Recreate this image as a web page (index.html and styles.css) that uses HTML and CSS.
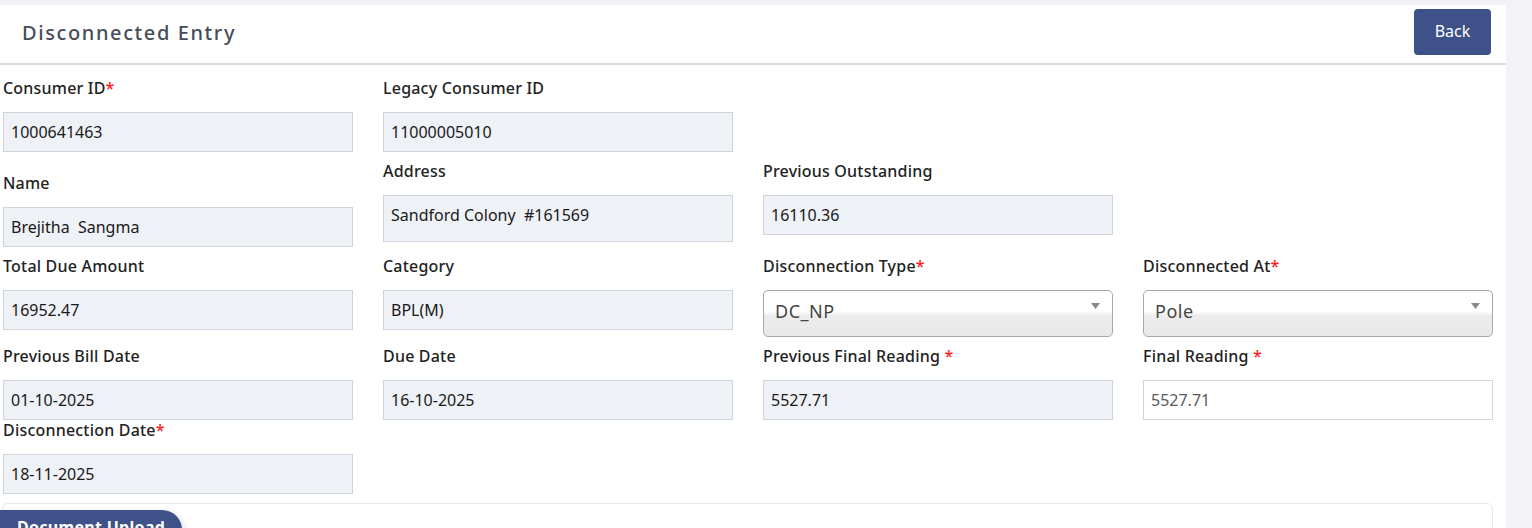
FILE: index.html
```html
<!DOCTYPE html>
<html>
<head>
<meta charset="utf-8">
<link rel="stylesheet" href="styles.css">
</head>
<body>
<div class="page">
  <div class="card">
    <div class="header">
      <h1 class="title">Disconnected Entry</h1>
      <button class="back">Back</button>
    </div>
    <div class="form">
      <div class="row row1">
        <div class="field">
          <label class="lbl">Consumer ID<span class="req">*</span></label>
          <div class="inp">1000641463</div>
        </div>
        <div class="field">
          <label class="lbl">Legacy Consumer ID</label>
          <div class="inp">11000005010</div>
        </div>
      </div>
      <div class="row">
        <div class="field shift">
          <label class="lbl">Name</label>
          <div class="inp">Brejitha&nbsp; Sangma</div>
        </div>
        <div class="field">
          <label class="lbl">Address</label>
          <div class="inp tall">Sandford Colony&nbsp; #161569</div>
        </div>
        <div class="field">
          <label class="lbl">Previous Outstanding</label>
          <div class="inp">16110.36</div>
        </div>
      </div>
      <div class="row">
        <div class="field">
          <label class="lbl">Total Due Amount</label>
          <div class="inp">16952.47</div>
        </div>
        <div class="field">
          <label class="lbl">Category</label>
          <div class="inp">BPL(M)</div>
        </div>
        <div class="field">
          <label class="lbl">Disconnection Type<span class="req">*</span></label>
          <div class="sel"><span>DC_NP</span><svg class="arrow" width="9" height="6" viewBox="0 0 9 6"><path d="M0 0H9L4.5 6Z" fill="#888"/></svg></div>
        </div>
        <div class="field">
          <label class="lbl">Disconnected At<span class="req">*</span></label>
          <div class="sel"><span>Pole</span><svg class="arrow" width="9" height="6" viewBox="0 0 9 6"><path d="M0 0H9L4.5 6Z" fill="#888"/></svg></div>
        </div>
      </div>
      <div class="row">
        <div class="field">
          <label class="lbl">Previous Bill Date</label>
          <div class="inp">01-10-2025</div>
        </div>
        <div class="field">
          <label class="lbl">Due Date</label>
          <div class="inp">16-10-2025</div>
        </div>
        <div class="field">
          <label class="lbl">Previous Final Reading <span class="req">*</span></label>
          <div class="inp">5527.71</div>
        </div>
        <div class="field">
          <label class="lbl">Final Reading <span class="req">*</span></label>
          <div class="inp white">5527.71</div>
        </div>
      </div>
      <div class="row row5">
        <div class="field">
          <label class="lbl">Disconnection Date<span class="req">*</span></label>
          <div class="inp">18-11-2025</div>
        </div>
      </div>
    </div>
    <div class="upload">
      <div class="tab">Document Upload</div>
    </div>
  </div>
</div>
</body>
</html>
```
FILE: styles.css
```css
* { box-sizing: border-box; }
html, body { margin: 0; padding: 0; }
body {
  background: #f2f2f7;
  font-family: "Noto Sans", "Open Sans", sans-serif;
  color: #1f1f1f;
  overflow: hidden;
}
.page {
  padding-top: 5px;
  width: 1506px;
}
.card {
  background: #fff;
  height: 523px;
  overflow: hidden;
}
.header {
  height: 60px;
  border-bottom: 2px solid #dcdcdc;
  display: flex;
  align-items: center;
  justify-content: space-between;
  padding: 0 15px 0 22px;
}
.title {
  margin: 0;
  font-size: 20px;
  font-weight: 500;
  letter-spacing: 1.6px;
  color: #474d58;
  padding-bottom: 3px;
}
.back {
  background: #3f5189;
  color: #fff;
  border: none;
  border-radius: 4px;
  width: 77px;
  height: 46px;
  font-family: inherit;
  font-size: 16px;
  margin-bottom: 4px;
  padding: 0 0 2px;
}
.form {
  padding: 12px 0 0 3px;
}
.row {
  display: grid;
  grid-template-columns: repeat(4, 350px);
  column-gap: 30px;
  align-items: start;
  margin-bottom: 8px;
}
.row.row5 { margin-top: -9px; }
.field { display: flex; flex-direction: column; }
.field.shift { margin-top: 12px; }
.lbl {
  font-size: 16px;
  font-weight: 500;
  letter-spacing: 0.2px;
  line-height: 22px;
  height: 22px;
  margin-bottom: 13px;
  color: #222;
}
.req { color: #ff1a1a; }
.inp {
  height: 40px;
  background: #eef1f6;
  border: 1px solid #cfd3da;
  padding: 0 7px;
  display: flex;
  align-items: center;
  font-size: 16px;
  color: #1a1a1a;
}
.inp.tall { height: 47px; padding-bottom: 7px; }
.inp.white { background: #fff; color: #5a5a5a; font-size: 16px; }
.sel {
  height: 47px;
  border: 1px solid #a8a8a8;
  border-radius: 5px;
  background: linear-gradient(#fff 0%, #fff 45%, #ececec 55%, #e8e8e8 100%);
  padding: 0 12px 0 11px;
  display: flex;
  align-items: center;
  justify-content: space-between;
  font-size: 18px;
  color: #444;
  position: relative;
}
.sel span { letter-spacing: 0.5px; padding-bottom: 5px; }
.sel .arrow { align-self: flex-start; margin-top: 12px; }
.upload {
  margin: 9px 13px 0 2px;
  border: 1px solid #e8e8e8;
  border-radius: 6px;
  height: 40px;
  padding-top: 6px;
}
.tab {
  margin-left: -3px;
  width: 182px;
  height: 36px;
  background: #3f5189;
  color: #fff;
  font-weight: 700;
  font-size: 16px;
  letter-spacing: 0.3px;
  border-radius: 0 20px 0 0;
  padding: 6px 0 0 17px;
  box-shadow: 2px 2px 6px rgba(0,0,0,0.15);
}
```
